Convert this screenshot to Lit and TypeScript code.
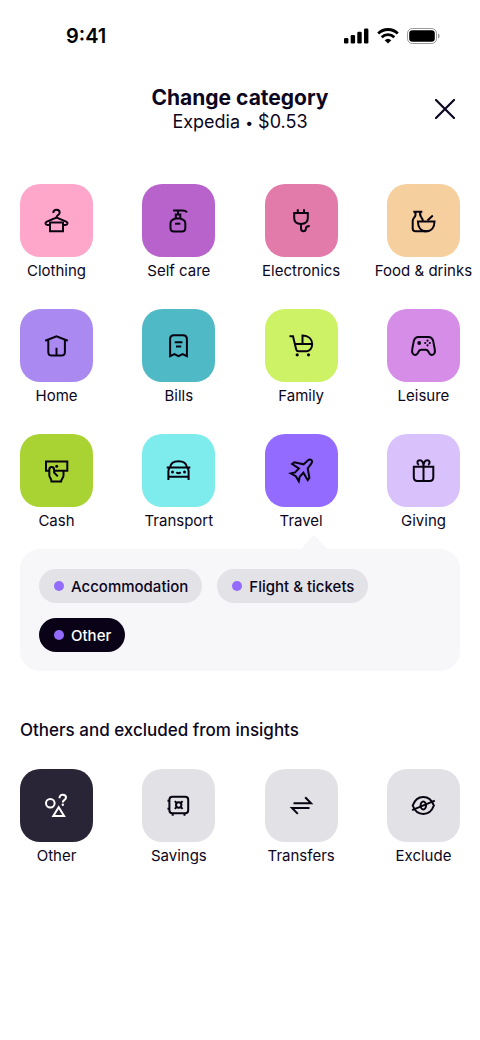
import { LitElement, html, css, svg } from "lit";
import { customElement, property, state } from "lit/decorators.js";
import { classMap } from "lit/directives/class-map.js";

const icons: Record<string, unknown> = {
  clothing: svg`<path d="M8.800 4.400C8.800 2.400 10.200 1.300 12 1.300S15.200 2.600 15.200 4.200C15.200 6.600 12 6.400 12 9"/><path d="M5.500 16.400H3C.7 16.400.3 14 2.300 13.100L12 9l9.700 4.100c2 .9 1.600 3.300-.7 3.300h-2.500"/><path d="M5.500 14h13v8.800h-13z"/>`,
  selfcare: svg`<path d="M6.600 2h9.400c2.200 0 3.400.5 4.500 1.700M11.500 2v4M9.300 10V6h4.500v4"/><path d="M9.200 10c-3 .9-5.200 1.900-5.200 4.700v4.800C4 22 5 23 7.500 23h7.800c2.500 0 3.500-1 3.500-3.500v-4.800c0-2.800-2.200-3.800-5.200-4.700z"/><path d="M8.500 15.200h5.300"/>`,
  electronics: svg`<path d="M8.300.8v3.600M14.500.8v3.600M4.700 4.400h13.600v5.100c0 3.700-2.700 5.900-6.800 5.900s-6.800-2.200-6.800-5.900z"/><path d="M11.500 15.400v4.300c0 2 1 3 2.500 3s2.400-1 2.400-2.600c0-1.700 1.300-2.500 3.800-2.500"/>`,
  food: svg`<path d="M1.800 3.200h9M3.500 3.200c1.300 3 .7 4.300-.9 6-.9 1-1.400 1.900-1.400 3.300V20c0 2 .9 2.800 2.800 2.800h11.300M9.100 3.200c-1.100 2.600-.7 4 .6 5.400 1 1 1.500 2 1.500 4M16 12l5.300-4.900"/><path d="M6.400 13H23c0 5.800-3.200 9.800-8.300 9.800S6.400 18.800 6.400 13z"/>`,
  home: svg`<path d="M.7 7.300 12 2.800l11.300 4.500M3.800 6.500v12c0 2.500 1 3.600 3.500 3.600h9.500c2.500 0 3.600-1.100 3.600-3.600v-12M12 14.300v7.800"/>`,
  bills: svg`<path d="M3.600 22.600V5.700c0-2.800 1.200-3.900 4-3.900h8.800c2.800 0 4 1.100 4 3.900v16.900l-4.300-2-4.100 2.100-4.100-2.100zM8.200 8.800h7.700M9.500 13h5.200"/>`,
  family: svg`<path d="M0 2.700h3.500l3.200 13.200c.3 1.200 1 1.800 2.300 1.800h8.300c2.800 0 5.400-3 5.400-7.200C22.700 5.500 19 2 13 2v8.500M5.300 10.500h17.400"/><circle class="solid" cx="7.700" cy="21.300" r="1.600"/><circle class="solid" cx="19" cy="21.300" r="1.600"/>`,
  leisure: svg`<path d="M7.200 3.400h9.600c2.500 0 4.200 1.200 4.900 4.200l1.500 7.800c.8 4-.7 6-2.700 6-1.600 0-2.600-1-3.200-2.500-.8-2.200-1.600-2.700-3.200-2.700H9.900c-1.600 0-2.400.5-3.200 2.700-.6 1.500-1.600 2.500-3.200 2.500-2 0-3.500-2-2.700-6l1.500-7.800c.7-3 2.400-4.200 4.900-4.200z"/><circle class="solid" cx="7.700" cy="9.500" r="1.900"/><g class="solid"><circle cx="16" cy="7.200" r="1.100"/><circle cx="16" cy="11.800" r="1.100"/><circle cx="13.700" cy="9.500" r="1.100"/><circle cx="18.300" cy="9.500" r="1.100"/></g>`,
  cash: svg`<path d="M4.800 12.200H1.500V3.100h21.300v9.100H9.600"/><circle class="solid" cx="12.200" cy="7.700" r="1.500"/><path d="M13.300 17.900 9.600 14V11.200c0-3.600-4.800-3.600-4.800 0v5.600c0 2.600 2.200 2.700 2.200 6.300h9.600c0-3.200 2.400-2.900 2.400-6.400v-4.500"/>`,
  transport: svg`<path d="M3.500 9c.6-4.300 3-6.200 8.500-6.200S19.900 4.700 20.500 9M.2 9h23.600M3.500 9c-1.200.9-1.600 2-1.600 3.500v9M20.500 9c1.200.9 1.600 2 1.600 3.500v9M1.900 18.200h20.200M9.800 13.800c1.200 1.100 3.200 1.100 4.400 0"/><circle class="solid" cx="6" cy="13.500" r="1.500"/><circle class="solid" cx="18" cy="13.500" r="1.500"/>`,
  travel: svg`<path d="M14.200 5.800 18.300 2c2.700-2.200 5.500.1 3.600 2.800L18.200 10l1.700 9.200-1.700 2.500-4.300-7.500-3.700 4-.9 4.500-3-5-5-2.800 4.300-1L9.400 10 2.600 5.500 4.800 3.800z"/>`,
  giving: svg`<path d="M2.300 8.200h19.500v10.500c0 2.500-1.100 3.700-3.600 3.700H5.900c-2.500 0-3.600-1.200-3.600-3.700zM12 8.200v14.200M12 8.200C12 4.300 10.700 1.700 8.300 1.700c-2.700 0-3.300 3.400-.9 4.600M12 8.200c0-3.900 1.300-6.500 3.700-6.500 2.700 0 3.300 3.400.9 4.600"/>`,
  other: svg`<circle cx="5.800" cy="9.700" r="4.300"/><path d="m14.200 13.700 5.400 8.900H8.800zM15 4.700c0-2.300 1.200-3.400 3.200-3.400s3.300 1 3.300 2.800c0 2.600-3.200 2-3.200 5"/><circle class="solid" cx="18.300" cy="11.300" r="1.200"/>`,
  savings: svg`<rect x="2.900" y="3.200" width="18.800" height="16.600" rx="3"/><path d="M1 7.200h2M1 15.200h2M6.200 19.800v2.500M18 19.800v2.500"/><circle cx="12.200" cy="11.500" r="2.700"/><path d="m8.300 7.600 2 2M16.100 7.600l-2 2M8.300 15.400l2-2M16.100 15.400l-2-2"/>`,
  transfers: svg`<path d="M4 9.700h17.500l-5.800-6M20 14.400H2.500l5.800 6"/>`,
  exclude: svg`<path d="M1.200 12C3.300 6.300 7 3.500 11.800 3.500S20.300 6.300 22.400 12c-2.100 5.700-5.800 8.500-10.600 8.500S3.300 17.700 1.200 12z"/><ellipse cx="11.800" cy="12" rx="2.700" ry="3.900"/><path d="M.6 16.700 23.300 7.200"/>`,
};

interface Category {
  id: string;
  label: string;
  color: string;
}

const categories: Category[] = [
  { id: "clothing", label: "Clothing", color: "#ffa6cb" },
  { id: "selfcare", label: "Self care", color: "#b862cb" },
  { id: "electronics", label: "Electronics", color: "#e27aaa" },
  { id: "food", label: "Food & drinks", color: "#f6cf9f" },
  { id: "home", label: "Home", color: "#aa8af0" },
  { id: "bills", label: "Bills", color: "#4fb9c5" },
  { id: "family", label: "Family", color: "#cdf265" },
  { id: "leisure", label: "Leisure", color: "#d68de7" },
  { id: "cash", label: "Cash", color: "#a8d332" },
  { id: "transport", label: "Transport", color: "#7eecec" },
  { id: "travel", label: "Travel", color: "#936bff" },
  { id: "giving", label: "Giving", color: "#d9c1fb" },
];

const excluded: Category[] = [
  { id: "other", label: "Other", color: "#292536" },
  { id: "savings", label: "Savings", color: "#e2e1e6" },
  { id: "transfers", label: "Transfers", color: "#e2e1e6" },
  { id: "exclude", label: "Exclude", color: "#e2e1e6" },
];

@customElement("category-tile")
class CategoryTile extends LitElement {
  @property({ attribute: false }) category!: Category;

  static styles = css`
    :host {
      display: block;
    }
    .tile {
      display: flex;
      flex-direction: column;
      align-items: center;
      gap: 4px;
      width: 100%;
      padding: 0;
      border: 0;
      background: none;
      color: #0c0620;
      font: inherit;
      cursor: pointer;
    }
    .swatch {
      display: grid;
      place-items: center;
      box-sizing: border-box;
      width: 100%;
      aspect-ratio: 1;
      border-radius: 20px;
      color: #080310;
    }
    .light {
      color: #fff;
    }
    .icon {
      width: 25px;
      height: 25px;
      overflow: visible;
      fill: none;
      stroke: currentColor;
      stroke-width: 2;
    }
    .solid {
      fill: currentColor;
      stroke: none;
    }
    .label {
      font-size: 15px;
      line-height: 20px;
      white-space: nowrap;
    }
  `;

  render() {
    const { id, label, color } = this.category;
    return html`<button class="tile" type="button">
      <span
        class=${classMap({ swatch: true, light: id === "other" })}
        style="background:${color}"
      >
        <svg class="icon" viewBox="-0.5 -0.5 25 25" aria-hidden="true">${icons[id]}</svg>
      </span>
      <span class="label">${label}</span>
    </button>`;
  }
}

@customElement("app-root")
class AppRoot extends LitElement {
  @state() private chosen = "Other";

  static styles = css`
    :host {
      display: block;
      min-height: 100vh;
      background: #fff;
      color: #0c0620;
      font-family: Inter, "Liberation Sans", sans-serif;
    }
    .status {
      display: flex;
      align-items: center;
      justify-content: space-between;
      padding: 24px 40px 0 66px;
      color: #000;
      font-size: 20px;
      font-weight: 600;
      line-height: 24px;
    }
    .signals {
      display: flex;
      align-items: center;
      gap: 8px;
    }
    .header {
      display: grid;
      grid-template-columns: 30px 1fr 30px;
      align-items: center;
      padding: 37px 20px 0;
      text-align: center;
    }
    .titles {
      grid-column: 2;
    }
    .title {
      margin: 0;
      font-size: 21px;
      font-weight: 700;
      line-height: 26px;
    }
    .subtitle {
      margin: 0;
      font-size: 18px;
      line-height: 22px;
    }
    .bullet {
      font-size: 14px;
      line-height: 1;
    }
    .close {
      display: grid;
      place-items: center;
      width: 30px;
      height: 30px;
      padding: 0;
      border: 0;
      background: none;
      color: inherit;
      cursor: pointer;
    }
    .content {
      padding: 51px 20px 40px;
    }
    .grid {
      display: grid;
      grid-template-columns: repeat(4, 73px);
      justify-content: space-between;
      row-gap: 28px;
    }
    .panel {
      position: relative;
      display: flex;
      flex-wrap: wrap;
      gap: 15px;
      margin-top: 18px;
      padding: 20px 19px 19px;
      border-radius: 20px;
      background: #f7f6f9;
    }
    .pointer {
      position: absolute;
      left: 279px;
      bottom: 100%;
      fill: #f7f6f9;
    }
    .chip {
      display: flex;
      align-items: center;
      gap: 7px;
      height: 34px;
      padding: 0 14px 0 15px;
      border: 0;
      border-radius: 17px;
      background: #e3e2e7;
      color: inherit;
      font: inherit;
      font-size: 15px;
      font-weight: 500;
      cursor: pointer;
    }
    .active {
      background: #0a0318;
      color: #fff;
    }
    .dot {
      width: 10px;
      height: 10px;
      border-radius: 50%;
      background: #936bff;
    }
    .section {
      margin: 47px 0 27px;
      font-size: 17px;
      font-weight: 500;
      line-height: 24px;
    }
  `;

  render() {
    return html`
      <div class="status">
        <span>9:41</span>
        <span class="signals">
          <svg width="25" height="16" viewBox="0 0 25 16" aria-hidden="true">
            <rect x="0" y="10" width="4.400" height="5.500" rx="1.300" />
            <rect x="6.700" y="7" width="4.400" height="8.500" rx="1.300" />
            <rect x="13.300" y="3.800" width="4.400" height="11.700" rx="1.300" />
            <rect x="20" y="0.500" width="4.400" height="15" rx="1.300" />
          </svg>
          <svg width="22" height="16" viewBox="0 0 22 16" fill="none" stroke="#000" stroke-width="2.800" aria-hidden="true">
            <path d="M1.200 5.500a14 14 0 0 1 19.600 0M4.700 9.200a9 9 0 0 1 12.600 0" />
            <path d="M11 15.400 7.700 12.200a4.800 4.800 0 0 1 6.600 0z" fill="#000" stroke="none" />
          </svg>
          <svg width="33" height="16" viewBox="0 0 33 16" aria-hidden="true">
            <rect x="0.500" y="0.500" width="29" height="15" rx="4.800" fill="none" stroke="#9a9a9a" />
            <rect x="2.200" y="2.200" width="25.600" height="11.600" rx="3.300" />
            <path d="M31 5.500c2.200.8 2.200 4.200 0 5z" fill="#9a9a9a" />
          </svg>
        </span>
      </div>

      <header class="header">
        <div class="titles">
          <h1 class="title">Change category</h1>
          <p class="subtitle">Expedia <span class="bullet">•</span> $0.53</p>
        </div>
        <button class="close" type="button" aria-label="Close">
          <svg width="20" height="20" viewBox="0 0 20 20" fill="none" stroke="currentColor" stroke-width="2.200" stroke-linecap="round" aria-hidden="true">
            <path d="m1 1 18 18M19 1 1 19" />
          </svg>
        </button>
      </header>

      <main class="content">
        <div class="grid">
          ${categories.map((c) => html`<category-tile .category=${c}></category-tile>`)}
        </div>

        <div class="panel">
          <svg class="pointer" width="30" height="14" viewBox="0 0 30 14" aria-hidden="true">
            <path d="M0 14c1.500 0 2.500-.6 3.500-1.700L12.500 2.200c1.500-1.600 3.500-1.600 5 0l9 10.100c1 1.100 2 1.700 3.500 1.700z" />
          </svg>
          ${["Accommodation", "Flight & tickets", "Other"].map(
            (name) => html`<button
              type="button"
              class=${classMap({ chip: true, active: name === this.chosen })}
              aria-pressed=${name === this.chosen}
              @click=${() => (this.chosen = name)}
            >
              <span class="dot"></span>${name}
            </button>`
          )}
        </div>

        <h2 class="section">Others and excluded from insights</h2>
        <div class="grid">
          ${excluded.map((c) => html`<category-tile .category=${c}></category-tile>`)}
        </div>
      </main>
    `;
  }
}
